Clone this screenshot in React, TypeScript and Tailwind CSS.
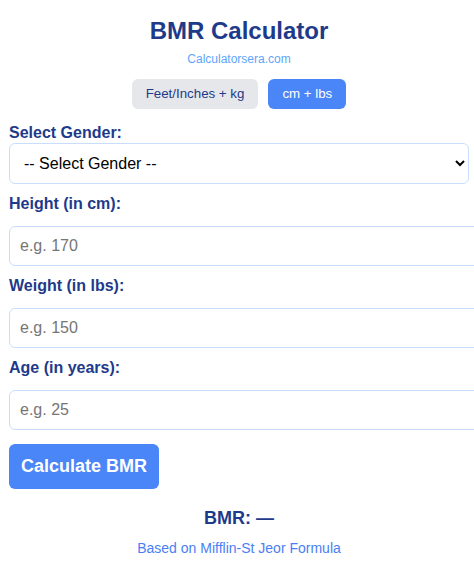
import { useState } from 'react'

type Unit = 'imperial' | 'metric'

const labelClass = 'block text-[16px] leading-[18px] font-bold text-[#1e3a8a]'
const inputClass =
  'mt-[13px] box-border block h-[40px] w-[calc(100%+22px)] rounded-[6px] border border-[#c9defc] bg-white px-[10px] text-[16px] text-black outline-none placeholder:text-[#757575]'

export default function App() {
  const [unit, setUnit] = useState<Unit>('metric')
  const [gender, setGender] = useState('')
  const [height, setHeight] = useState('')
  const [weight, setWeight] = useState('')
  const [age, setAge] = useState('')
  const [bmr, setBmr] = useState<number | null>(null)

  const calculate = () => {
    const h = parseFloat(height)
    const w = parseFloat(weight) * 0.453592
    const a = parseFloat(age)
    if (!gender || isNaN(h) || isNaN(w) || isNaN(a)) {
      setBmr(null)
      return
    }
    const base = 10 * w + 6.25 * h - 5 * a
    setBmr(Math.round(gender === 'male' ? base + 5 : base - 161))
  }

  return (
    <div className="w-full overflow-hidden bg-white font-['Liberation_Sans',Arial,sans-serif]">
      <div className="ml-[9px] w-[460px] pt-[17px] pb-[10px]">
        <h1 className="text-center text-[24px] leading-[28px] font-bold text-[#1e3a8a]">BMR Calculator</h1>
        <p className="mt-[7px] text-center text-[12px] leading-[14px] text-[#60a5fa]">Calculatorsera.com</p>

        <div className="mt-[13px] flex justify-center gap-[10px]">
          <button
            onClick={() => setUnit('imperial')}
            className={
              unit === 'imperial'
                ? 'flex h-[30px] items-center rounded-[6px] bg-[#4a86f7] px-[14px] text-[13.3px] text-white'
                : 'flex h-[30px] items-center rounded-[6px] bg-[#e5e7eb] px-[14px] text-[13.3px] text-[#1e3a8a]'
            }
          >
            Feet/Inches + kg
          </button>
          <button
            onClick={() => setUnit('metric')}
            className={
              unit === 'metric'
                ? 'flex h-[30px] items-center rounded-[6px] bg-[#4a86f7] px-[14px] text-[13.3px] text-white'
                : 'flex h-[30px] items-center rounded-[6px] bg-[#e5e7eb] px-[14px] text-[13.3px] text-[#1e3a8a]'
            }
          >
            cm + lbs
          </button>
        </div>

        <label className={`${labelClass} mt-[15px]`}>Select Gender:</label>
        <select
          value={gender}
          onChange={(e) => setGender(e.target.value)}
          className="mt-[1px] box-border block h-[41px] w-full rounded-[6px] border border-[#c9defc] bg-white px-[10px] text-[16px] text-black outline-none"
        >
          <option value="">-- Select Gender --</option>
          <option value="male">Male</option>
          <option value="female">Female</option>
        </select>

        <label className={`${labelClass} mt-[11px]`}>Height (in cm):</label>
        <input
          type="number"
          placeholder="e.g. 170"
          value={height}
          onChange={(e) => setHeight(e.target.value)}
          className={inputClass}
        />

        <label className={`${labelClass} mt-[11px]`}>Weight (in lbs):</label>
        <input
          type="number"
          placeholder="e.g. 150"
          value={weight}
          onChange={(e) => setWeight(e.target.value)}
          className={inputClass}
        />

        <label className={`${labelClass} mt-[11px]`}>Age (in years):</label>
        <input
          type="number"
          placeholder="e.g. 25"
          value={age}
          onChange={(e) => setAge(e.target.value)}
          className={inputClass}
        />

        <button
          onClick={calculate}
          className="mt-[14px] flex h-[45px] items-center rounded-[6px] bg-[#4a86f7] px-[12px] text-[18px] font-bold text-white"
        >
          Calculate BMR
        </button>

        <p className="mt-[19px] text-center text-[18px] leading-[20px] font-bold text-[#1e3a8a]">
          BMR: {bmr === null ? '—' : `${bmr} kcal/day`}
        </p>
        <p className="mt-[12px] text-center text-[14px] leading-[16px] text-[#4b7ef6]">
          Based on Mifflin-St Jeor Formula
        </p>
      </div>
    </div>
  )
}
